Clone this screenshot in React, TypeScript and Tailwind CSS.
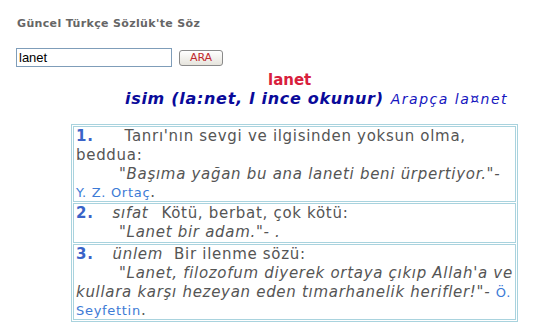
import React from "react";

const line = "whitespace-nowrap";
const quote = "whitespace-nowrap italic pl-[43px]";
const num = "text-[#3a63c8]";
const author = "text-[13px] text-[#3d7bd6]";

export default function App() {
  return (
    <div className="w-[542px] h-[334px] bg-white font-['DejaVu_Sans',Verdana,sans-serif] text-[#555]">
      <div className="pt-[17px] pl-[17px] text-[11px] font-bold text-[#666] leading-[13px] tracking-[0.35px]">
        Güncel Türkçe Sözlük'te Söz
      </div>

      {/* search */}
      <div className="flex items-center gap-[7px] pl-[16px] mt-[18px]">
        <input
          defaultValue="lanet"
          className="w-[156px] h-[19px] border border-[#7f9db9] px-[2px] text-[13px] text-black font-['Liberation_Sans',Arial,sans-serif] outline-none"
        />
        <button className="w-[44px] h-[16px] rounded-[3px] border border-[#8a8a8a] bg-gradient-to-b from-white to-[#e6e4dc] text-[11px] leading-[14px] text-[#c0282d]">
          ARA
        </button>
      </div>

      {/* heading */}
      <div className="pl-[268px] mt-[4px] text-[15px] font-bold leading-[18px] text-[#d8203c]">lanet</div>
      <div className="pl-[125px] leading-[20px] whitespace-nowrap">
        <span className="text-[16px] font-bold italic text-[#0a0a9a] tracking-[0.7px]">isim (la:net, l ince okunur)</span>
        <span className="text-[14px] italic text-[#1616c0] ml-[7px] tracking-[1.5px]">Arapça la¤net</span>
      </div>

      {/* meanings */}
      <table className="ml-[71px] mt-[15px] w-[443px] border border-[#a9d3de] border-separate border-spacing-[1px] text-[15px] leading-[19px] tracking-[0.7px]">
        <tbody>
          <tr>
            <td className="border border-[#a9d3de] px-[2px]">
              <div className={line}>
                <b className={num}>1.</b>
                <span className="ml-[31px]">Tanrı'nın sevgi ve ilgisinden yoksun olma,</span>
              </div>
              <div>beddua:</div>
              <div className={quote}>"Başıma yağan bu ana laneti beni ürpertiyor."-</div>
              <div className="leading-[17px]">
                <span className={author}>Y. Z. Ortaç</span>.
              </div>
            </td>
          </tr>
          <tr>
            <td className="border border-[#a9d3de] px-[2px]">
              <div className={line}>
                <b className={num}>2.</b>
                <span className="italic ml-[19px]">sıfat</span>
                <span className="ml-[13px]">Kötü, berbat, çok kötü:</span>
              </div>
              <div className={quote}>"Lanet bir adam."- .</div>
            </td>
          </tr>
          <tr>
            <td className="border border-[#a9d3de] px-[2px]">
              <div className={line}>
                <b className={num}>3.</b>
                <span className="italic ml-[19px]">ünlem</span>
                <span className="ml-[11px]">Bir ilenme sözü:</span>
              </div>
              <div className={quote}>"Lanet, filozofum diyerek ortaya çıkıp Allah'a ve</div>
              <div className={line}>
                <span className="italic">kullara karşı hezeyan eden tımarhanelik herifler!"-</span>{" "}
                <span className={author}>Ö.</span>
              </div>
              <div className="leading-[17px]">
                <span className={author}>Seyfettin</span>.
              </div>
            </td>
          </tr>
        </tbody>
      </table>
    </div>
  );
}
